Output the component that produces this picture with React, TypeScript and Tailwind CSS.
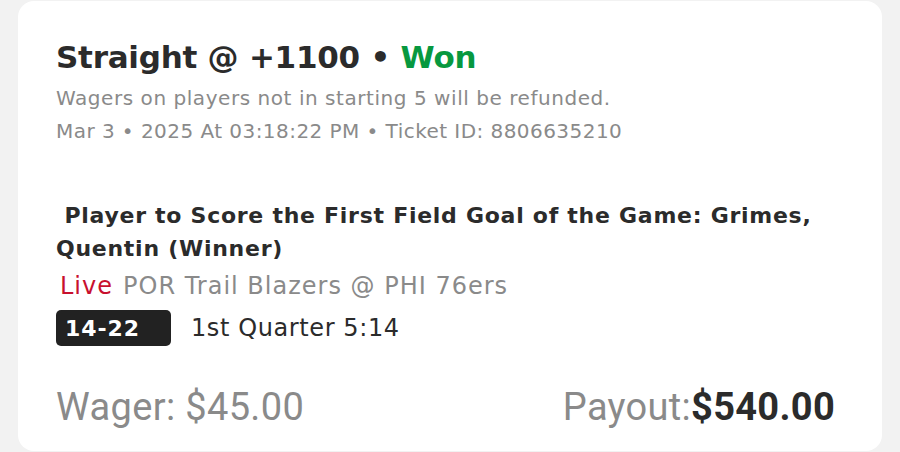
import React from "react";

export default function App() {
  return (
    <div className="w-[900px] h-[452px] bg-[#f2f2f2] overflow-hidden" style={{ fontFamily: "'DejaVu Sans', Inter, sans-serif" }}>
      <div className="mx-[18px] mt-[1px] h-[450px] bg-white rounded-[16px] px-[38px] pt-[36px]">
        <div className="text-[31px] leading-[40px] font-bold text-[#2b2b2b] whitespace-nowrap tracking-[-0.25px]">
          Straight @ +1100 • <span className="text-[#07983f]">Won</span>
        </div>
        <div className="mt-[5px] text-[20px] leading-[33px] text-[#8a8a8a] tracking-[0.55px] whitespace-nowrap">
          Wagers on players not in starting 5 will be refunded.
        </div>
        <div className="text-[20px] leading-[33px] text-[#8a8a8a] tracking-[0.45px] whitespace-nowrap">
          Mar 3 • 2025 At 03:18:22 PM • Ticket ID: 8806635210
        </div>
        <div className="mt-[51px] text-[22px] leading-[33px] font-bold text-[#2b2b2b] tracking-[0.73px]">
          &nbsp;Player to Score the First Field Goal of the Game: Grimes, Quentin (Winner)
        </div>
        <div className="mt-[5px] text-[24px] leading-[32px] flex gap-[10px] pl-[4px] whitespace-nowrap tracking-[1px]">
          <span className="text-[#c8102e]">Live</span>
          <span className="text-[#8a8a8a]">POR Trail Blazers @ PHI 76ers</span>
        </div>
        <div className="mt-[8px] flex items-center gap-[20px]">
          <div className="h-[36px] w-[115px] rounded-[5px] bg-[#222222] text-white text-[22px] font-bold flex items-center pl-[9px] tracking-[0.9px]">
            14-22
          </div>
          <div className="text-[24px] text-[#2b2b2b] tracking-[0.6px] whitespace-nowrap">1st Quarter 5:14</div>
        </div>
        <div className="mt-[40px] flex justify-between items-center pr-[9px] leading-[42px] tracking-[0.3px]" style={{ fontFamily: "Roboto, sans-serif" }}>
          <div className="text-[38px] text-[#8a8a8a] whitespace-nowrap tracking-[0.35px]">Wager: $45.00</div>
          <div className="text-[38px] whitespace-nowrap">
            <span className="text-[#8a8a8a]">Payout:</span>
            <span className="text-[#2b2b2b] font-bold">$540.00</span>
          </div>
        </div>
      </div>
    </div>
  );
}
